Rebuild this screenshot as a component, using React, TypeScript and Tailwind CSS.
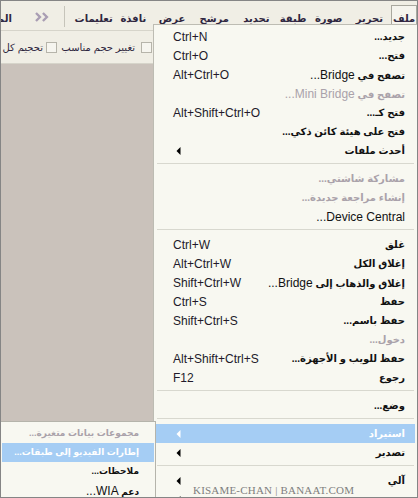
import React from "react";

type Item = {
  label: string;
  shortcut?: string;
  disabled?: boolean;
  sub?: boolean;
  active?: boolean;
};

const groups: Item[][] = [
  [
    { label: "جديد...", shortcut: "Ctrl+N" },
    { label: "فتح...", shortcut: "Ctrl+O" },
    { label: "تصفح في Bridge...", shortcut: "Alt+Ctrl+O" },
    { label: "تصفح في Mini Bridge...", disabled: true },
    { label: "فتح كـ...", shortcut: "Alt+Shift+Ctrl+O" },
    { label: "فتح على هيئة كائن ذكي..." },
    { label: "أحدث ملفات", sub: true },
  ],
  [
    { label: "مشاركة شاشتي...", disabled: true },
    { label: "إنشاء مراجعة جديدة...", disabled: true },
    { label: "Device Central..." },
  ],
  [
    { label: "غلق", shortcut: "Ctrl+W" },
    { label: "إغلاق الكل", shortcut: "Alt+Ctrl+W" },
    { label: "إغلاق والذهاب إلى Bridge...", shortcut: "Shift+Ctrl+W" },
    { label: "حفظ", shortcut: "Ctrl+S" },
    { label: "حفظ باسم...", shortcut: "Shift+Ctrl+S" },
    { label: "دخول...", disabled: true },
    { label: "حفظ للويب و الأجهزة...", shortcut: "Alt+Shift+Ctrl+S" },
    { label: "رجوع", shortcut: "F12" },
  ],
  [{ label: "وضع..." }],
  [
    { label: "استيراد", sub: true, active: true },
    { label: "تصدير", sub: true },
  ],
  [
    { label: "آلي", sub: true },
    { label: "نصوص", sub: true },
  ],
];

const importItems: Item[] = [
  { label: "مجموعات بيانات متغيرة...", disabled: true },
  { label: "إطارات الفيديو إلى طبقات...", active: true },
  { label: "ملاحظات..." },
  { label: "دعم WIA..." },
];

// menu bar titles with the width of the cell each one sits in
const menuBar: [string, string][] = [
  ["تحرير", "w-[44px]"],
  ["صورة", "w-[38px]"],
  ["طبقة", "w-[34px]"],
  ["تحديد", "w-[40px]"],
  ["مرشح", "w-[45px]"],
  ["عرض", "w-[40px]"],
  ["نافذة", "w-[38px]"],
  ["تعليمات", "w-[42px]"],
];

// latin runs inside arabic labels are drawn in regular weight
const Label = ({ text }: { text: string }) => {
  const parts = text.split(/([A-Za-z][A-Za-z .]*)/);
  return (
    <span className="whitespace-nowrap">
      {parts.map((p, i) =>
        /[A-Za-z]/.test(p) ? (
          <span key={i} className="font-normal text-[12px]">
            {p}
          </span>
        ) : (
          <span key={i}>{p}</span>
        )
      )}
    </span>
  );
};

const Arrow = ({ white }: { white?: boolean }) => (
  <svg width="5" height="8" viewBox="0 0 5 8" className="ml-[3px]">
    <polygon points="4.5,0 4.5,8 0.5,4" fill={white ? "#ffffff" : "#000000"} />
  </svg>
);

const Row = ({ item, sub }: { item: Item; sub?: boolean }) => (
  <div
    dir="rtl"
    className={`flex h-[19px] items-center justify-between ${
      sub ? "pr-[15px] pl-[6px] text-[9px]" : "pr-[10px] pl-[17px]"
    } ${
      item.active
        ? "bg-[#a5cdf4] text-white"
        : item.disabled
        ? "text-[#aaa2aa]"
        : "text-[#111]"
    }`}
  >
    <Label text={item.label} />
    {item.shortcut && (
      <span dir="ltr" className="font-normal text-[12px] text-[#221a2a]">
        {item.shortcut}
      </span>
    )}
    {item.sub && <Arrow white={item.active} />}
  </div>
);

const Separator = () => (
  <div className="h-[9px] pt-[3px]">
    <div className="mx-[1px] h-px bg-[#d8d8cf]" />
  </div>
);

const Checkbox = () => (
  <span className="inline-block h-[11px] w-[11px] shrink-0 border border-[#b6b4aa] bg-[#f6f5ef]" />
);

export default function App() {
  return (
    <div
      className="relative flex h-[498px] w-[418px] flex-col overflow-hidden border border-[#858585] bg-[#cac2bb] text-[10px] font-bold"
      style={{ fontFamily: '"Liberation Sans", "DejaVu Sans", sans-serif' }}
    >
      {/* menu bar */}
      <div
        dir="rtl"
        className="flex h-[30px] shrink-0 items-start border-b border-[#d6d4ca] bg-[#f0eee5] pt-[4px] text-[#2e2640]"
      >
        <div className="flex h-[26px] w-[26px] justify-center border border-b-0 border-[#a9a89f] bg-[#f5f4ee] pt-[5px]">
          ملف
        </div>
        {menuBar.map(([m, w]) => (
          <div key={m} className={`flex justify-center pt-[6px] ${w}`}>
            {m}
          </div>
        ))}
        <div className="mr-[8px] mt-[1px] h-[21px] w-px bg-[#c6c4ba]" />
        <svg width="15" height="10" viewBox="0 0 15 10" className="mr-[14px] mt-[7px]">
          <polyline points="1,1 5,5 1,9" fill="none" stroke="#a99db3" strokeWidth="2.4" />
          <polyline points="8,1 12,5 8,9" fill="none" stroke="#a99db3" strokeWidth="2.4" />
        </svg>
        <div className="mr-[23px] w-[11px] overflow-hidden whitespace-nowrap pt-[6px]">
          المستندات
        </div>
      </div>

      {/* options bar */}
      <div className="flex h-[33px] shrink-0 items-center border-b border-[#d6d4ca] bg-[#f0eee5] pl-[3px] font-normal text-[#2e2640]">
        <span dir="rtl" className="w-[39px] min-w-0 shrink-0 whitespace-nowrap text-right">
          تحجيم كل
        </span>
        <span className="ml-[3px] flex">
          <Checkbox />
        </span>
        <span dir="rtl" className="ml-[11px] w-[67px] min-w-0 shrink-0 whitespace-nowrap text-right">
          تغيير حجم مناسب
        </span>
        <span className="ml-[6px] flex">
          <Checkbox />
        </span>
      </div>

      <div className="flex-1" />

      {/* file menu */}
      <div className="absolute bottom-0 left-[152px] right-0 top-[23px] border-l border-t border-[#bdbcb3] bg-[#f8f8f1] px-[2px] pt-[2px]">
        {groups.map((g, gi) => (
          <div key={gi}>
            {gi > 0 && <Separator />}
            {g.map((it) => (
              <Row key={it.label} item={it} />
            ))}
          </div>
        ))}
      </div>

      {/* import submenu */}
      <div className="absolute left-0 top-[420px] h-[90px] w-[155px] border border-l-0 border-[#b5b4ab] bg-[#f8f8f1] px-[1px] pt-[2px]">
        {importItems.map((it) => (
          <Row key={it.label} item={it} sub />
        ))}
      </div>

      <div
        className="absolute left-[192px] top-[481px] text-[11px] font-normal tracking-[0.2px] text-[#7e7e7e]"
        style={{ fontFamily: '"Liberation Serif", serif' }}
      >
        KISAME-CHAN | BANAAT.COM
      </div>
    </div>
  );
}
